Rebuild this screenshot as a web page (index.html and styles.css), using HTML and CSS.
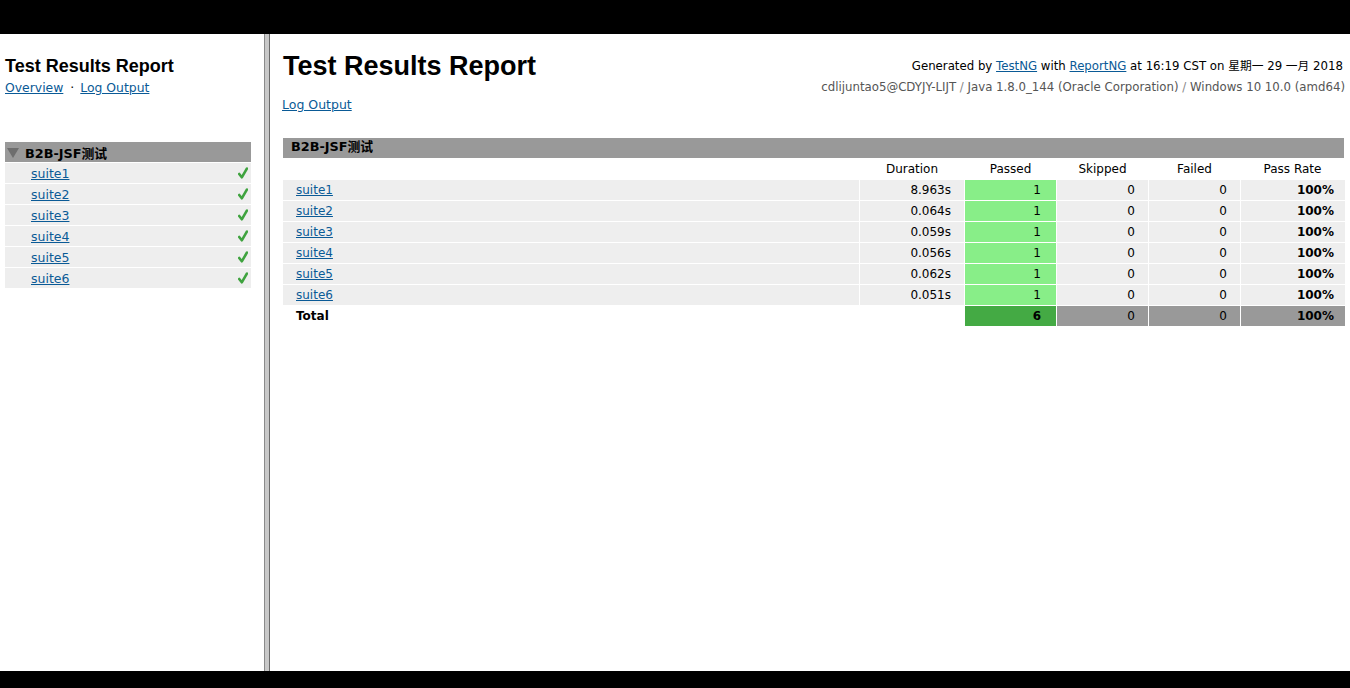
FILE: index.html
```html
<!DOCTYPE html>
<html>
<head>
<meta charset="utf-8">
<title>Test Results Report</title>
<link rel="stylesheet" href="styles.css">
</head>
<body>
<div class="screen">
  <div class="bar-top"></div>
  <div class="frames">
    <aside class="nav">
      <h1 class="nav-title">Test Results Report</h1>
      <div class="nav-links"><a href="#">Overview</a><span class="dot">&middot;</span><a href="#">Log Output</a></div>
      <div class="tree">
        <div class="tree-head">
          <svg class="tri" width="12" height="10" viewBox="0 0 12 10"><polygon points="0,0 12,0 6,10" fill="#6e6e6e"/></svg>
          <span>B2B-JSF测试</span>
        </div>
        <div class="tree-row"><a href="#">suite1</a><svg class="check" width="10" height="12" viewBox="0 0 10 12"><path d="M1.2 7 L3.8 10.3 L9 1.5" fill="none" stroke="#3fa33f" stroke-width="2.6" stroke-linecap="round" stroke-linejoin="round"/></svg></div>
        <div class="tree-row"><a href="#">suite2</a><svg class="check" width="10" height="12" viewBox="0 0 10 12"><path d="M1.2 7 L3.8 10.3 L9 1.5" fill="none" stroke="#3fa33f" stroke-width="2.6" stroke-linecap="round" stroke-linejoin="round"/></svg></div>
        <div class="tree-row"><a href="#">suite3</a><svg class="check" width="10" height="12" viewBox="0 0 10 12"><path d="M1.2 7 L3.8 10.3 L9 1.5" fill="none" stroke="#3fa33f" stroke-width="2.6" stroke-linecap="round" stroke-linejoin="round"/></svg></div>
        <div class="tree-row"><a href="#">suite4</a><svg class="check" width="10" height="12" viewBox="0 0 10 12"><path d="M1.2 7 L3.8 10.3 L9 1.5" fill="none" stroke="#3fa33f" stroke-width="2.6" stroke-linecap="round" stroke-linejoin="round"/></svg></div>
        <div class="tree-row"><a href="#">suite5</a><svg class="check" width="10" height="12" viewBox="0 0 10 12"><path d="M1.2 7 L3.8 10.3 L9 1.5" fill="none" stroke="#3fa33f" stroke-width="2.6" stroke-linecap="round" stroke-linejoin="round"/></svg></div>
        <div class="tree-row"><a href="#">suite6</a><svg class="check" width="10" height="12" viewBox="0 0 10 12"><path d="M1.2 7 L3.8 10.3 L9 1.5" fill="none" stroke="#3fa33f" stroke-width="2.6" stroke-linecap="round" stroke-linejoin="round"/></svg></div>
      </div>
    </aside>
    <div class="divider"></div>
    <main class="main">
      <div class="head">
        <div class="head-left">
          <h1 class="main-title">Test Results Report</h1>
          <a class="log-link" href="#">Log Output</a>
        </div>
        <div class="meta">
          <div class="meta1">Generated by <a href="#">TestNG</a> with <a href="#">ReportNG</a> at 16:19 CST on 星期一 29 一月 2018</div>
          <div class="meta2">cdlijuntao5@CDYJY-LIJT <span class="sep">/</span> Java 1.8.0_144 (Oracle Corporation) <span class="sep">/</span> Windows 10 10.0 (amd64)</div>
        </div>
      </div>
      <table class="results">
        <colgroup>
          <col class="c-name"><col class="c-dur"><col class="c-num"><col class="c-num"><col class="c-num"><col class="c-rate">
        </colgroup>
        <thead>
          <tr><th class="group" colspan="6">B2B-JSF测试</th></tr>
          <tr class="cols"><th></th><th>Duration</th><th>Passed</th><th>Skipped</th><th>Failed</th><th>Pass Rate</th></tr>
        </thead>
        <tbody>
          <tr><td class="name"><a href="#">suite1</a></td><td class="num">8.963s</td><td class="num pass">1</td><td class="num">0</td><td class="num">0</td><td class="num rate">100%</td></tr>
          <tr><td class="name"><a href="#">suite2</a></td><td class="num">0.064s</td><td class="num pass">1</td><td class="num">0</td><td class="num">0</td><td class="num rate">100%</td></tr>
          <tr><td class="name"><a href="#">suite3</a></td><td class="num">0.059s</td><td class="num pass">1</td><td class="num">0</td><td class="num">0</td><td class="num rate">100%</td></tr>
          <tr><td class="name"><a href="#">suite4</a></td><td class="num">0.056s</td><td class="num pass">1</td><td class="num">0</td><td class="num">0</td><td class="num rate">100%</td></tr>
          <tr><td class="name"><a href="#">suite5</a></td><td class="num">0.062s</td><td class="num pass">1</td><td class="num">0</td><td class="num">0</td><td class="num rate">100%</td></tr>
          <tr><td class="name"><a href="#">suite6</a></td><td class="num">0.051s</td><td class="num pass">1</td><td class="num">0</td><td class="num">0</td><td class="num rate">100%</td></tr>
          <tr class="total"><td class="name blank">Total</td><td class="blank"></td><td class="num tpass">6</td><td class="num tgray">0</td><td class="num tgray">0</td><td class="num tgray rate">100%</td></tr>
        </tbody>
      </table>
    </main>
  </div>
  <div class="bar-bottom"></div>
</div>
</body>
</html>
```
FILE: styles.css
```css
html, body {
  margin: 0;
  padding: 0;
  background: #000;
}
body {
  font-family: "DejaVu Sans", "Noto Sans CJK SC", sans-serif;
  font-size: 12px;
  color: #000;
}
a { color: #0a5a96; }

.screen {
  width: 1350px;
  height: 688px;
  display: flex;
  flex-direction: column;
}
.bar-top { height: 34px; background: #000; flex: none; }
.bar-bottom { height: 17px; background: #000; flex: none; }
.frames {
  flex: 1;
  display: flex;
  background: #fff;
  overflow: hidden;
}

/* left nav frame */
.nav {
  width: 246px;
  padding: 0 12px 0 5px;
  flex: none;
}
.nav-title {
  font-family: "Liberation Sans", Arial, sans-serif;
  font-size: 18px;
  font-weight: bold;
  margin: 21px 0 0 0;
  line-height: 22px;
}
.nav-links {
  font-size: 12.4px;
  line-height: 16px;
  margin-top: 3px;
}
.nav-links .dot { margin: 0 6px 0 7px; }
.tree { margin-top: 46px; }
.tree-head {
  background: #999;
  height: 20px;
  display: flex;
  align-items: center;
  font-weight: bold;
  font-size: 12.8px;
  margin-bottom: 1px;
}
.tree-head .tri { margin: 1px 6px 0 2px; }
.tree-row {
  background: #eee;
  height: 20px;
  margin-bottom: 1px;
  display: flex;
  align-items: center;
  justify-content: space-between;
  padding: 0 3px 0 26px;
  font-size: 12.5px;
}

.divider {
  width: 4px;
  flex: none;
  margin-left: 1px;
  background: #c8c8c8;
  border-left: 1px solid #8a8a8a;
  border-right: 1px solid #6a6a6a;
}

/* main frame */
.main {
  flex: 1;
  padding: 0 5px 0 13px;
}
.head {
  display: flex;
  justify-content: space-between;
}
.main-title {
  font-family: "Liberation Sans", Arial, sans-serif;
  font-size: 27px;
  font-weight: bold;
  margin: 16px 0 0 0;
  line-height: 32px;
}
.log-link {
  display: inline-block;
  margin-top: 15px;
  margin-left: -1px;
  font-size: 12.5px;
  line-height: 16px;
}
.meta {
  text-align: right;
  padding-top: 22px;
  font-size: 11.75px;
  line-height: 21px;
  margin-right: 0;
}
.meta1 { margin-right: 2px; }
.meta2 { color: #555; }
.meta2 .sep { color: #888; }

.results {
  margin-top: 25px;
  width: 100%;
  border-collapse: separate;
  border-spacing: 0;
  font-size: 12px;
}
.c-name { width: 577px; }
.c-dur { width: 105px; }
.c-num { width: 92px; }
.results th, .results td {
  height: 20px;
  padding: 0;
  border-bottom: 1px solid #fff;
  border-right: 1px solid #fff;
}
.results th.group {
  background: #999;
  text-align: left;
  padding-left: 8px;
  font-weight: bold;
  font-size: 12.8px;
  line-height: 18px;
  border-bottom: none;
  vertical-align: top;
}
.results tr.cols th {
  font-weight: normal;
  text-align: center;
  height: 21px;
}
.results td { background: #eee; }
.results td.name { padding-left: 13px; }
.results td.num { text-align: right; padding-right: 13px; }
.results td.pass { background: #88ee88; padding-right: 15px; }
.results td.rate { font-weight: bold; padding-right: 11px; border-right: none; }
.results tr.total td.blank { background: #fff; font-weight: bold; }
.results td.tpass { background: #44aa44; font-weight: bold; padding-right: 15px; }
.results td.tgray { background: #999; }
```
